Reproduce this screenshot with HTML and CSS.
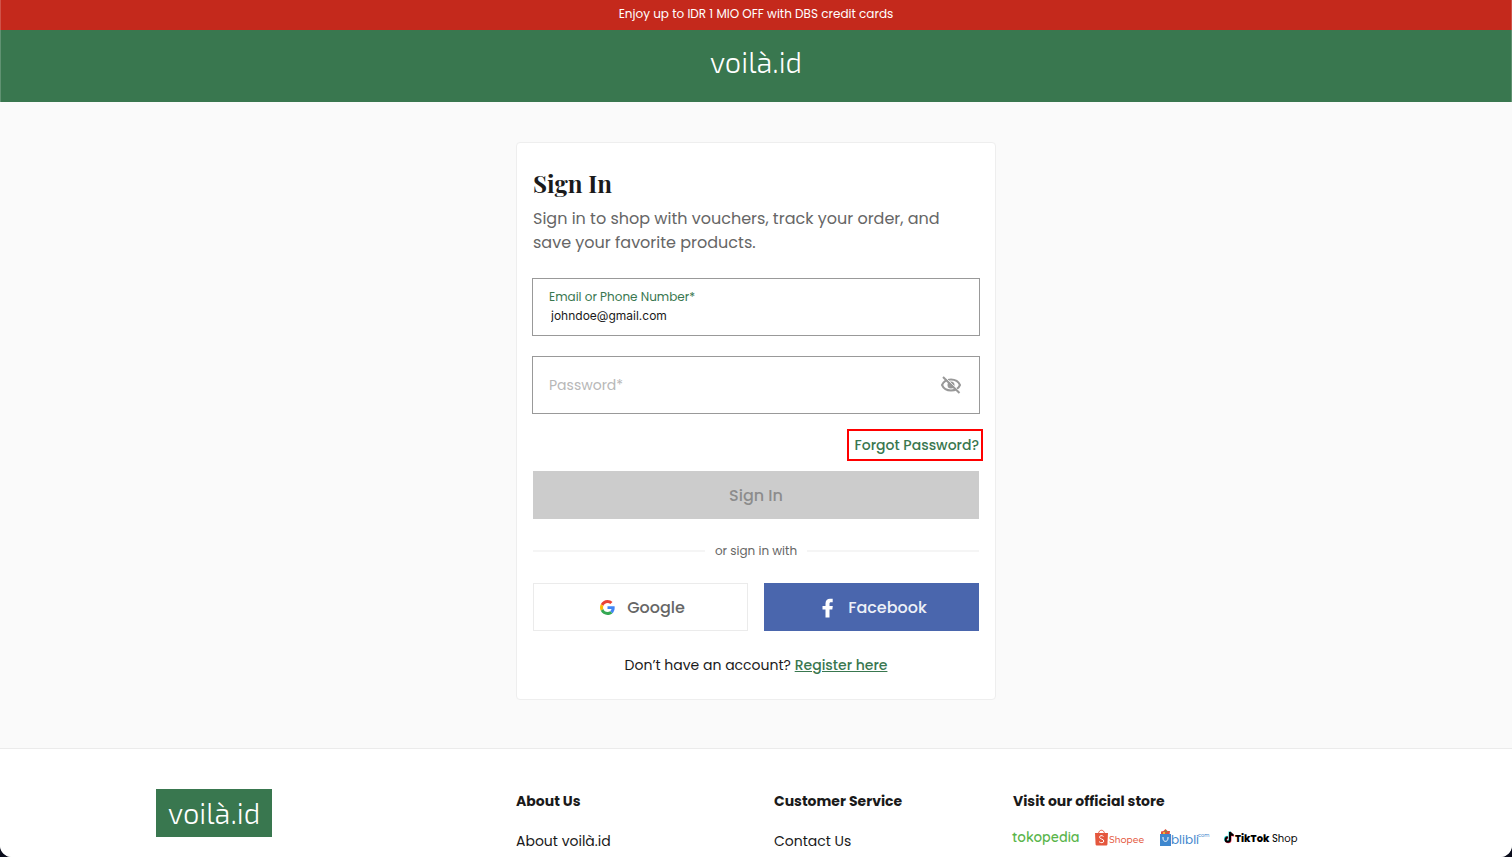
FILE: index.html
```html
<!DOCTYPE html>
<html lang="en">
<head>
    <meta charset="utf-8">
    <meta name="viewport" content="width=device-width, initial-scale=1">
    <title>Sign In - voilà.id</title>
    <link rel="stylesheet" href="styles.css">
</head>
<body>
    <div class="promo">Enjoy up to IDR 1 MIO OFF with DBS credit cards</div>
    <header class="header">
        <a class="logo" href="#">voilà.id</a>
    </header>

    <main class="main">
        <form class="card">
            <h1 class="title">Sign In</h1>
            <p class="intro">Sign in to shop with vouchers, track your order, and save your favorite products.</p>

            <div class="field">
                <label class="field-label" for="email">Email or Phone Number*</label>
                <input class="field-input email" id="email" type="text" value="johndoe@gmail.com">
            </div>
            <div class="field field-row">
                <input class="field-input password" id="password" type="password" placeholder="Password*" aria-label="Password">
                <button class="eye" type="button" aria-label="Show password">
                    <svg width="24" height="20" viewBox="0 0 24 20" fill="none" stroke="#999" stroke-width="2">
                        <path d="M3 10C4.500 6.500 8 4.500 12 4.500s7.500 2 9 5.500c-1.500 3.500-5 5.500-9 5.500S4.500 13.500 3 10z"/>
                        <circle cx="12" cy="10" r="3.500" fill="#999" stroke="none"/>
                        <path d="M5.500 1.500l16 16" stroke="#fff" stroke-width="1"/>
                        <path d="M4 2l16.500 16"/>
                    </svg>
                </button>
            </div>

            <a class="forgot" href="#">Forgot Password?</a>
            <button class="submit" type="submit" disabled>Sign In</button>

            <div class="divider">or sign in with</div>

            <div class="social">
                <button class="social-btn google" type="button">
                    <svg width="15" height="15" viewBox="0 0 48 48">
                        <path fill="#EA4335" d="M24 9.500c3.540 0 6.710 1.220 9.210 3.600l6.850-6.850C35.900 2.380 30.470 0 24 0 14.620 0 6.510 5.380 2.560 13.220l7.980 6.190C12.430 13.720 17.740 9.500 24 9.500z"/>
                        <path fill="#4285F4" d="M46.980 24.550c0-1.570-.15-3.090-.38-4.550H24v9.020h12.940c-.58 2.960-2.260 5.480-4.780 7.180l7.730 6c4.510-4.180 7.090-10.360 7.090-17.650z"/>
                        <path fill="#FBBC05" d="M10.530 28.590c-.48-1.450-.76-2.990-.76-4.590s.27-3.140.76-4.590l-7.980-6.190C.92 16.460 0 20.120 0 24s.92 7.540 2.560 10.780l7.970-6.190z"/>
                        <path fill="#34A853" d="M24 48c6.480 0 11.930-2.130 15.890-5.810l-7.730-6c-2.150 1.450-4.920 2.300-8.160 2.300-6.260 0-11.570-4.220-13.470-9.910l-7.980 6.190C6.510 42.620 14.620 48 24 48z"/>
                    </svg>
                    Google
                </button>
                <button class="social-btn facebook" type="button">
                    <svg width="12" height="22" viewBox="0 0 12 22" fill="#fff">
                        <path d="M3.500 21.500V13.500H.5V10h3V7.500C3.500 4.500 5.200 2.800 8 2.800h2.700v3.400H9C7.900 6.200 7.500 6.700 7.500 7.700V10h3.300l-.5 3.500H7.500v8z"/>
                    </svg>
                    Facebook
                </button>
            </div>

            <p class="register">Don’t have an account? <a class="register-link" href="#">Register here</a></p>
        </form>
    </main>

    <footer class="footer">
        <div class="footer-grid">
            <div><a class="logo logo-box" href="#">voilà.id</a></div>
            <div>
                <h2 class="footer-title">About Us</h2>
                <a class="footer-link" href="#">About voilà.id</a>
            </div>
            <div>
                <h2 class="footer-title">Customer Service</h2>
                <a class="footer-link" href="#">Contact Us</a>
            </div>
            <div>
                <h2 class="footer-title">Visit our official store</h2>
                <div class="stores">
                    <a class="store" href="#">
                        <svg width="66" height="18" viewBox="0 0 66 18">
                            <text class="tokopedia" x="-1" y="13">tokopedia</text>
                        </svg>
                    </a>
                    <a class="store" href="#">
                        <svg width="49" height="18" viewBox="0 0 49 18">
                            <path d="M3.500 5C3.500 0 9.500 0 9.500 5" fill="none" stroke="#e4573d"/>
                            <path d="M0 4h13l-.6 11.500q-.1 1-1.100 1H1.700q-1 0-1.100-1z" fill="#e4573d"/>
                            <path d="M8.500 7.500C7 6 4.500 6.500 4.500 8.200c0 2.200 4.300 1.500 4.300 3.800 0 2-3 2.300-4.700.7" fill="none" stroke="#fff"/>
                            <text class="shopee" x="14" y="14">Shopee</text>
                        </svg>
                    </a>
                    <a class="store" href="#">
                        <svg width="49" height="18" viewBox="0 0 49 18">
                            <path d="M1 2.500l2.500-.5 2-2 2 2 2.500 0-.5 4H1z" fill="#e0523f"/>
                            <path d="M3 3h2v3H3z" fill="#f5b82e"/>
                            <path d="M5 1l2 1-1 2z" fill="#54a947"/>
                            <path d="M0 5h11v12H0z" fill="#3f87ce"/>
                            <path d="M3 8v1c0 4.500 5 4.500 5 0V8" fill="none" stroke="#fff"/>
                            <text class="blibli" x="11" y="15">blibli</text>
                            <text class="blibli-com" x="38" y="8">com</text>
                        </svg>
                    </a>
                    <a class="store" href="#">
                        <svg width="76" height="18" viewBox="0 0 76 18">
                            <g fill="none">
                                <path d="M4.500 2.500V10a2.200 2.200 0 1 1-2.200-2.200M4.500 2.500c.3 2 1.500 3 3.500 3" stroke="#25d9d3" stroke-width="2"/>
                                <path d="M5.500 3.500V11a2.200 2.200 0 1 1-2.200-2.200M5.500 3.500c.3 2 1.500 3 3.500 3" stroke="#f5345b" stroke-width="2"/>
                                <path d="M5 3v7.500a2.200 2.200 0 1 1-2.200-2.200M5 3c.3 2 1.500 3 3.500 3" stroke="#000" stroke-width="2"/>
                            </g>
                            <text class="tiktok" x="10" y="13">TikTok</text>
                            <text class="tiktok-shop" x="47" y="13">Shop</text>
                        </svg>
                    </a>
                </div>
            </div>
        </div>
    </footer>
</body>
</html>
```
FILE: styles.css
```css
* {
    box-sizing: border-box;
}

html {
    background: #0b0d1c;
}

body {
    margin: 0;
    min-height: 100vh;
    display: flex;
    flex-direction: column;
    overflow: hidden;
    border-radius: 0 0 12px 12px;
    background: #fafafa;
    color: #1a1a1a;
    font-family: Poppins, Inter, sans-serif;
    font-size: 14px;
}

button, input {
    font-family: inherit;
}

.promo {
    padding: 4px 0 6px;
    border: 1px solid rgba(255, 255, 255, 0.2);
    border-width: 0 1px;
    background: #c4291c;
    color: #fff;
    font-size: 12px;
    line-height: 20px;
    text-align: center;
}

.header {
    height: 72px;
    display: flex;
    align-items: center;
    justify-content: center;
    padding-bottom: 8px;
    border: 1px solid rgba(255, 255, 255, 0.2);
    border-width: 0 1px;
    background: #39774f;
}

.logo {
    color: #fff;
    font-family: "Exo 2", Exo, "Noto Sans", sans-serif;
    font-size: 29px;
    font-weight: 300;
    line-height: 40px;
    text-decoration: none;
}

.logo-box {
    display: inline-block;
    padding: 4px 12px;
    background: #39774f;
}

.main {
    padding: 40px 16px 48px;
}

.card {
    max-width: 480px;
    margin: 0 auto;
    padding: 24px 16px;
    display: flex;
    flex-direction: column;
    border: 1px solid #eee;
    border-radius: 4px;
    background: #fff;
}

.title {
    margin: 0 0 8px;
    font-family: "Playfair Display", "Liberation Serif", serif;
    font-size: 24px;
    font-weight: 700;
    line-height: 32px;
}

.intro {
    margin: 0 0 24px;
    color: #666;
    font-size: 16px;
    line-height: 24px;
}

.field {
    height: 56px;
    margin-bottom: 22px;
    padding: 8px 16px;
    display: flex;
    flex-direction: column;
    box-shadow: 0 0 0 1px #999;
}

.field-row {
    flex-direction: row;
    align-items: center;
    margin-bottom: 16px;
}

.field-label {
    color: #39774f;
    font-size: 12px;
    line-height: 20px;
}

.field-input {
    flex: 1;
    min-width: 0;
    padding: 0;
    border: 0;
    outline: 0;
    background: none;
    color: #1a1a1a;
}

.email {
    padding: 0 2px 4px;
    font-family: Inter, sans-serif;
    font-size: 12px;
}

.password {
    font-size: 14px;
}

.password::placeholder {
    color: #b8b8b8;
}

.eye {
    display: flex;
    padding: 0;
    border: 0;
    background: none;
}

.forgot {
    align-self: flex-end;
    margin: 0 -4px 10px 0;
    padding: 0 2px 0 6px;
    border: 2px solid #f00;
    color: #39774f;
    font-weight: 500;
    line-height: 28px;
    text-decoration: none;
}

.submit {
    height: 48px;
    border: 0;
    background: #ccc;
    color: #8c8c8c;
    font-size: 16px;
    font-weight: 500;
}

.divider {
    display: flex;
    align-items: center;
    gap: 10px;
    margin: 24px 0;
    color: #666;
    font-size: 12px;
    line-height: 16px;
}

.divider::before,
.divider::after {
    content: "";
    flex: 1;
    height: 2px;
    background: #f5f5f5;
}

.social {
    display: grid;
    grid-template-columns: 1fr 1fr;
    gap: 16px;
}

.social-btn {
    height: 48px;
    padding: 0 6px 0 10px;
    display: flex;
    align-items: center;
    justify-content: center;
    gap: 12px;
    border: 1px solid #ebebeb;
    background: #fff;
    color: #666;
    font-size: 16px;
    font-weight: 500;
}

.facebook {
    gap: 14px;
    padding-left: 12px;
    border-color: #4a66ad;
    background: #4a66ad;
    color: #edf0f7;
}

.register {
    margin: 24px 0 0;
    line-height: 20px;
    text-align: center;
}

.register-link {
    color: #39774f;
    font-weight: 500;
}

.footer {
    flex: 1;
    padding: 40px 16px 0;
    border-top: 1px solid #ebebeb;
    background: #fff;
}

.footer-grid {
    max-width: 1200px;
    margin: 0 auto;
    display: grid;
    grid-template-columns: 360fr 258fr 239fr 343fr;
}

.footer-title {
    margin: 0 0 16px;
    font-size: 14px;
    font-weight: 700;
    line-height: 24px;
}

.footer-link {
    color: #1a1a1a;
    line-height: 24px;
    text-decoration: none;
}

.stores {
    display: flex;
    gap: 16px;
}

.store,
.store svg {
    display: block;
}

.store svg {
    overflow: visible;
}

.tokopedia {
    fill: #5ab54b;
    font-family: Quicksand, Poppins, sans-serif;
    font-size: 14px;
    font-weight: 600;
}

.shopee {
    fill: #e4573d;
    font-family: Quicksand, Poppins, sans-serif;
    font-size: 10px;
    font-weight: 500;
}

.blibli {
    fill: #3f87ce;
    font-size: 12px;
}

.blibli-com {
    fill: #3f87ce;
    font-size: 5px;
}

.tiktok {
    font-size: 10px;
    font-weight: 800;
}

.tiktok-shop {
    font-size: 10px;
}
```
